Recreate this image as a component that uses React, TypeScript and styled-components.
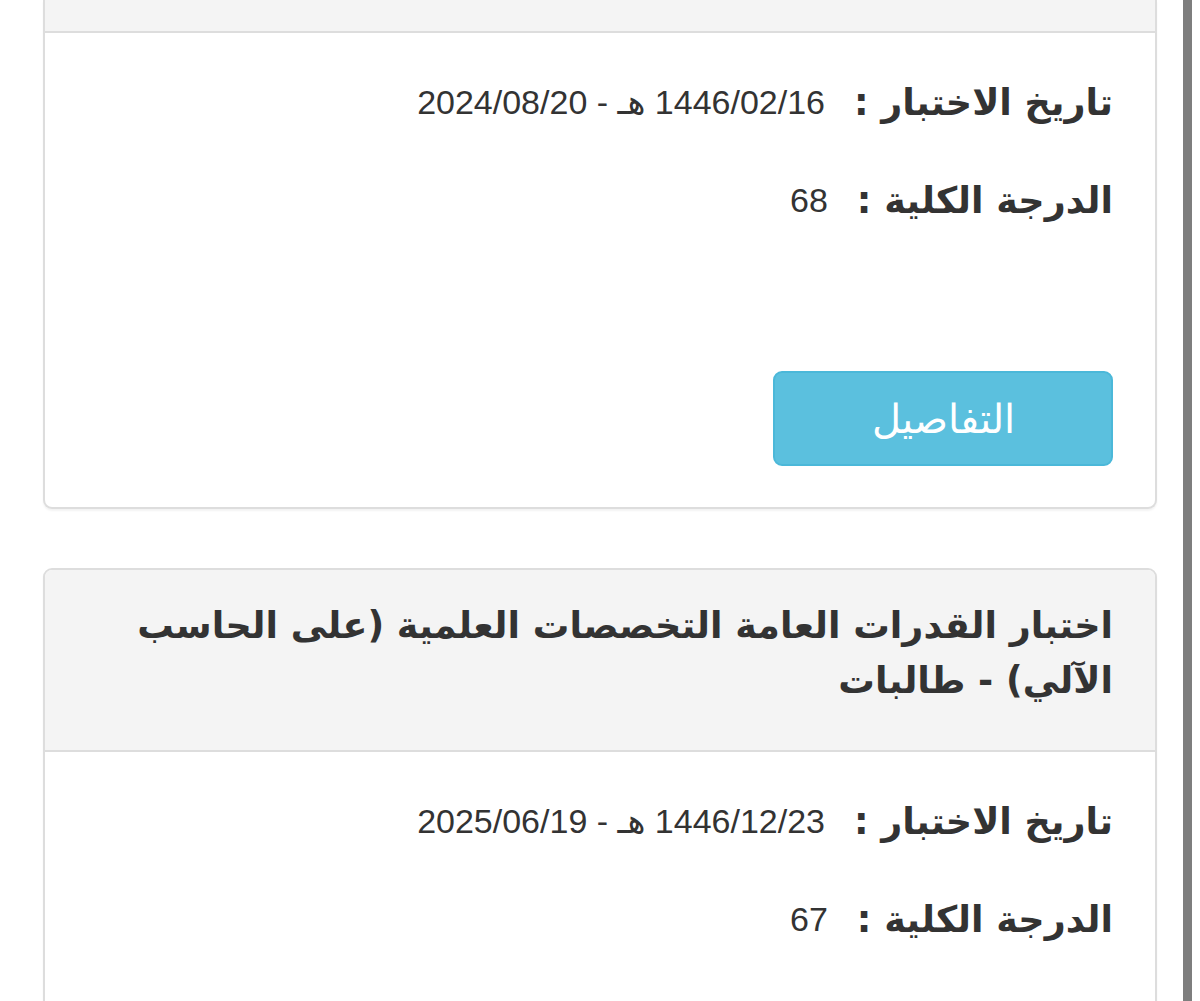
import React from 'react';
import styled, { createGlobalStyle } from 'styled-components';

const GlobalStyle = createGlobalStyle`
	html, body {
		margin: 0;
		padding: 0;
		background: #ffffff;
	}
	body {
		font-family: "DejaVu Sans", "Liberation Sans", sans-serif;
		color: #333333;
	}
`;

const Page = styled.div`
	display: flex;
	align-items: stretch;
	height: 1001px;
	overflow: hidden;
`;

const Column = styled.main`
	flex: 1;
	padding: 0 26px 0 43px;
	direction: rtl;
`;

const Rail = styled.div`
	width: 9px;
	margin-right: 8px;
	background: #7e7e7e;
`;

const Panel = styled.section<{ $cut?: boolean }>`
	border: 2px solid #dddddd;
	border-top-width: ${(p) => (p.$cut ? '0' : '2px')};
	border-radius: ${(p) => (p.$cut ? '0 0 9px 9px' : '9px')};
	background: #ffffff;
	box-shadow: 0 2px 2px rgba(0, 0, 0, 0.05);
	margin-bottom: 59px;
	overflow: hidden;
`;

const PanelHead = styled.header<{ $cut?: boolean }>`
	background: #f4f4f4;
	border-bottom: 2px solid #dddddd;
	padding: ${(p) => (p.$cut ? '0' : '28px 42px 42px')};
	height: ${(p) => (p.$cut ? '31px' : 'auto')};
`;

const PanelTitle = styled.h4`
	margin: 0;
	font-size: 36.5px;
	line-height: 55px;
	font-weight: bold;
	color: #333333;
`;

const PanelBody = styled.div`
	padding: 44px 42px 41px;
`;

const Row = styled.div`
	display: flex;
	align-items: center;
	gap: 29px;
	height: 50px;
	margin-bottom: 48px;
`;

const Label = styled.span`
	font-size: 36.5px;
	font-weight: bold;
	color: #333333;
	white-space: nowrap;
`;

const Value = styled.span`
	font-family: "Liberation Sans", "DejaVu Sans", sans-serif;
	font-size: 34px;
	color: #333333;
	white-space: nowrap;
`;

const DetailsButton = styled.button`
	display: block;
	width: 340px;
	height: 95px;
	margin-top: 48px;
	border: 2px solid #4bb8d9;
	border-radius: 9px;
	background: #5bc0de;
	color: #ffffff;
	font-family: "DejaVu Sans", sans-serif;
	font-size: 40px;
	font-weight: 300;
	cursor: pointer;
`;

type Field = { label: string; value: string };

type Exam = {
	title?: string;
	fields: Field[];
	cut?: boolean;
};

const exams: Exam[] = [
	{
		cut: true,
		fields: [
			{ label: 'تاريخ الاختبار :', value: '1446/02/16 هـ - 2024/08/20' },
			{ label: 'الدرجة الكلية :', value: '68' },
			{ label: '', value: '' },
		],
	},
	{
		title: 'اختبار القدرات العامة التخصصات العلمية (على الحاسب الآلي) - طالبات',
		fields: [
			{ label: 'تاريخ الاختبار :', value: '1446/12/23 هـ - 2025/06/19' },
			{ label: 'الدرجة الكلية :', value: '67' },
			{ label: 'الدرجة الموزونة :', value: '' },
		],
	},
];

function ExamPanel({ exam }: { exam: Exam }) {
	return (
		<Panel $cut={exam.cut}>
			<PanelHead $cut={exam.cut}>
				{exam.title && <PanelTitle>{exam.title}</PanelTitle>}
			</PanelHead>
			<PanelBody>
				{exam.fields.map((f, i) => (
					<Row key={i}>
						<Label>{f.label}</Label>
						<Value>{f.value}</Value>
					</Row>
				))}
				<DetailsButton>التفاصيل</DetailsButton>
			</PanelBody>
		</Panel>
	);
}

export default function App(): JSX.Element {
	return (
		<>
			<GlobalStyle />
			<Page>
				<Column>
					{exams.map((exam, i) => (
						<ExamPanel key={i} exam={exam} />
					))}
				</Column>
				<Rail />
			</Page>
		</>
	);
}
